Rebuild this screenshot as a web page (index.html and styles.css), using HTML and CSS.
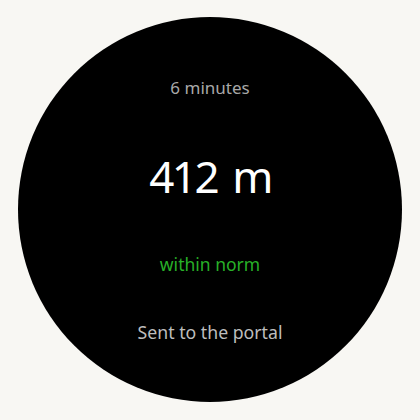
FILE: index.html
```html
<!DOCTYPE html>
<html>
<head>
<meta charset="utf-8">
<link rel="stylesheet" href="styles.css">
</head>
<body>
<div class="watch">
  <div class="duration">6 minutes</div>
  <div class="distance">412 m</div>
  <div class="status">within norm</div>
  <div class="sync">Sent to the portal</div>
</div>
</body>
</html>
```
FILE: styles.css
```css
html, body {
  margin: 0;
  padding: 0;
  background: #f8f7f3;
  width: 420px;
  height: 420px;
}
body {
  padding: 17px 0 0 18px;
  box-sizing: border-box;
  font-family: "Noto Sans", "Open Sans", sans-serif;
}
.watch {
  width: 384px;
  height: 385px;
  border-radius: 50%;
  background: #000;
  display: flex;
  flex-direction: column;
  align-items: center;
  padding-top: 61px;
  box-sizing: border-box;
}
.duration {
  font-size: 17px;
  line-height: 20px;
  color: #a8a8a8;
}
.distance {
  margin-top: 50px;
  font-size: 44px;
  line-height: 56px;
  letter-spacing: -2.5px;
  word-spacing: 6px;
  color: #fff;
}
.status {
  margin-top: 50px;
  font-size: 17.5px;
  line-height: 20px;
  color: #28b028;
}
.sync {
  margin-top: 47px;
  font-size: 17.7px;
  line-height: 22px;
  color: #bdbdbd;
}
```
